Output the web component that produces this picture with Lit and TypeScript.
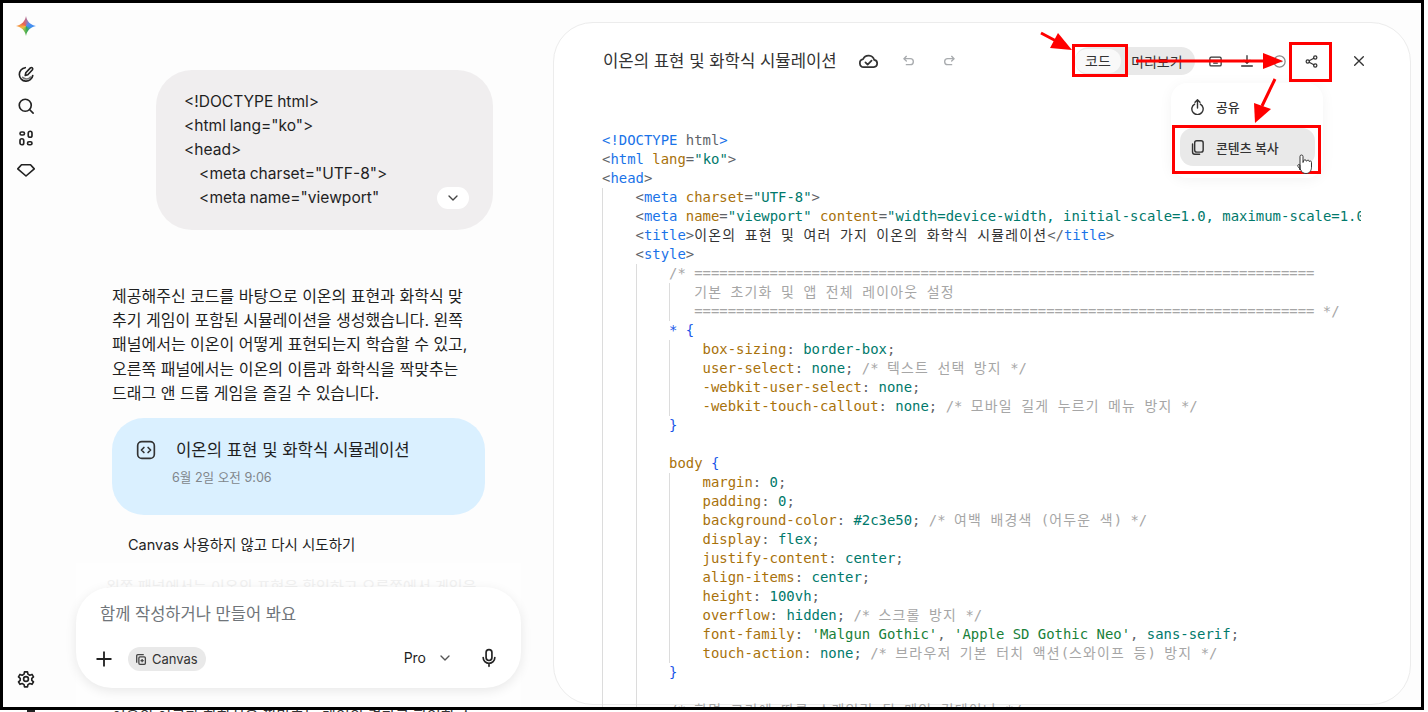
import { LitElement, html, svg, css, nothing, type TemplateResult, type SVGTemplateResult } from 'lit';
import { customElement } from 'lit/decorators.js';

const RULE = '='.repeat(74);

// hangul takes two cells in the code font, so each run gets extra tracking
const cells = (text: string) => text.split(/([가-힣]+)/).map((part, i) => i % 2 ? html`<span class="wide">${part}</span>` : part);

// one css declaration row of the code viewer
const decl = (prop: string, val: string | TemplateResult, note?: string) => html`<div class="ln"><span class="prop">${prop}</span><span class="pun">: </span><span class="val">${val}</span><span class="pun">;</span>${note ? html`<span class="cm"> /* ${cells(note)} */</span>` : nothing}</div>`;

const tag = (name: string) => html`<span class="pun">&lt;</span><span class="tag">${name}</span>`;
const close = html`<span class="pun">&gt;</span>`;
const attr = (name: string, val: string) => html` <span class="prop">${name}</span><span class="pun">=</span><span class="val">"${val}"</span>`;

@customElement('app-root')
export class AppRoot extends LitElement {
  static styles = css`
    :host {
      display: block;
      position: relative;
      width: 1428px;
      height: 712px;
      overflow: hidden;
      background: #fff;
      font-family: 'Inter', 'Noto Sans CJK KR', sans-serif;
      color: #1f1f1f;
    }
    svg { display: block; }
    .frame {
      box-sizing: border-box;
      width: 1424px;
      height: 710px;
      border: 3px solid #000;
      background: #fdfdfd;
      display: flex;
      overflow: hidden;
    }
    .strip {
      display: flex;
      height: 2px;
      overflow: hidden;
      font-size: 15px;
      line-height: 16px;
      white-space: nowrap;
      color: #333;
    }
    .strip i { width: 8px; height: 2px; margin: 0 77px 0 27px; background: #222; }
    .strip span { display: block; margin-top: -1px; }

    /* rail */
    .rail {
      width: 45px;
      flex: none;
      display: flex;
      flex-direction: column;
      align-items: center;
      padding: 13px 0 19px;
      box-sizing: border-box;
    }
    .rail svg { width: 18px; height: 18px; margin-left: 1px; }
    .star {
      width: 20px;
      height: 20px;
      margin: 0 0 29px 1px;
      background: conic-gradient(from -20deg, #d9656f 0deg, #5b8def 70deg, #3f8ff0 120deg, #34a853 185deg, #8cc152 225deg, #f4b942 270deg, #ef6a4c 320deg, #d9656f 360deg);
      clip-path: path('M10 0C11 5.500 14.500 9 20 10C14.500 11 11 14.500 10 20C9 14.500 5.500 11 0 10C5.500 9 9 5.500 10 0Z');
    }
    .rail .ri { margin-bottom: 14px; }
    .rail .gear { margin-top: auto; }

    /* chat column */
    .chat {
      width: 505px;
      flex: none;
      position: relative;
      padding-top: 67px;
      box-sizing: border-box;
    }
    .bubble {
      position: relative;
      box-sizing: border-box;
      width: 337px;
      height: 160px;
      margin-left: 108px;
      padding: 20px 28px;
      background: #f0eeef;
      border-radius: 36px;
      font-size: 15.55px;
      line-height: 24px;
      word-spacing: -0.6px;
      white-space: pre;
    }
    .chev {
      position: absolute;
      right: 24px;
      bottom: 21px;
      width: 32px;
      height: 22px;
      border-radius: 11px;
      background: #fff;
      display: flex;
      align-items: center;
      justify-content: center;
    }
    .answer {
      margin: 54px 0 0 64px;
      font-size: 16px;
      line-height: 24.2px;
      white-space: pre;
    }
    .doc {
      box-sizing: border-box;
      width: 373px;
      height: 97px;
      margin: 13px 0 0 64px;
      padding: 21px 0 0 24px;
      border-radius: 32px;
      background: #daf0ff;
      display: grid;
      grid-template-columns: 40px auto;
      justify-content: start;
      align-content: start;
      row-gap: 8px;
    }
    .doc svg { width: 20px; height: 20px; margin-top: 1px; }
    .doc-title { font-size: 16.7px; line-height: 22px; }
    .doc-date { grid-column: 2; margin-left: -4px; font-size: 12.6px; line-height: 18px; color: #80868b; }
    .retry { margin: 20px 0 0 80px; font-size: 14.5px; line-height: 20px; }
    .fade {
      position: absolute;
      left: 28px;
      right: 32px;
      top: 560px;
      height: 150px;
      background: #fefefe;
      overflow: hidden;
      padding-left: 30px;
    }
    .fade span {
      display: block;
      margin-top: 14px;
      font-size: 15px;
      line-height: 20px;
      white-space: nowrap;
      color: #f1f1f1;
    }
    .input {
      position: absolute;
      left: 28px;
      top: 584px;
      width: 445px;
      height: 101px;
      box-sizing: border-box;
      padding: 15px 24px 0 24px;
      background: #fff;
      border-radius: 36px;
      box-shadow: 0 3px 12px rgba(0, 0, 0, 0.09);
    }
    .hint { font-size: 16.5px; line-height: 24px; color: #70757a; }
    .tools { display: flex; align-items: center; margin-top: 21px; }
    .tools .plus { width: 20px; height: 20px; margin-left: -6px; }
    .chip {
      display: flex;
      align-items: center;
      gap: 5px;
      height: 24px;
      margin-left: 14px;
      padding: 0 8px 0 6px;
      border-radius: 12px;
      background: #e9e9e9;
      font-size: 13px;
      color: #333;
    }
    .pro { margin-left: auto; font-size: 14px; display: flex; align-items: center; gap: 11px; margin-top: -3px; }
    .mic { margin-left: 26px; margin-right: -2px; margin-top: -2px; }

    /* canvas card */
    .card {
      position: relative;
      box-sizing: border-box;
      flex: none;
      width: 858px;
      height: 683px;
      margin-top: 19px;
      background: #fff;
      border: 1px solid #ececec;
      border-radius: 40px;
    }
    .head {
      display: flex;
      align-items: center;
      height: 76px;
      padding: 0 35px 0 49px;
    }
    .title { font-size: 16.7px; color: #333; white-space: nowrap; margin-top: -2px; }
    .btn { flex: none; width: 40px; height: 32px; display: flex; align-items: center; justify-content: center; }
    .btn.s { width: 32px; }
    .cloud { margin-left: 12px; }
    .tabs {
      margin-left: auto;
      margin-right: 4px;
      display: flex;
      align-items: center;
      width: 120px;
      height: 28px;
      border-radius: 14px;
      background: #e9e9e9;
      font-size: 14px;
      color: #333;
    }
    .tabs .on {
      width: 46px;
      height: 24px;
      line-height: 24px;
      text-align: center;
      border-radius: 12px;
      background: #f9f9f9;
    }
    .tabs .off { margin-left: 10px; white-space: nowrap; }
    .x { margin-left: 16px; }
    .code {
      box-sizing: border-box;
      width: 759px;
      margin: 32px 0 0 48px;
      overflow: hidden;
      font-family: 'DejaVu Sans Mono', 'Noto Sans CJK KR', monospace;
      font-size: 13.93px;
      line-height: 19px;
      color: #333;
    }
    .ln { height: 19px; white-space: pre; }
    .block { border-left: 1px solid #dcdcdc; padding-left: calc(4ch - 1px); }
    .block.c3 { padding-left: calc(3ch - 1px); }
    .tag { color: #1a73e8; }
    .pun { color: #5f6368; }
    .prop { color: #a8710a; }
    .val { color: #00796b; }
    .str { color: #188038; }
    .cm { color: #a6a6a6; }
    .sel { color: #1a56e8; }
    .ko { color: #333; }
    .wide { letter-spacing: 1.2px; }

    /* share menu */
    .menu {
      position: absolute;
      left: 617px;
      top: 60px;
      width: 152px;
      height: 95px;
      border-radius: 16px;
      background: #fff;
      box-shadow: 0 2px 14px rgba(0, 0, 0, 0.05);
    }
    .item {
      position: absolute;
      left: 9px;
      width: 135px;
      height: 38px;
      box-sizing: border-box;
      padding-left: 9px;
      display: flex;
      align-items: center;
      gap: 10px;
      font-size: 12.9px;
      font-weight: 500;
      color: #333;
      border-radius: 13px;
    }
    .item.a { top: 4px; }
    .item.b { top: 45px; background: #e9e9e9; }

    /* red marks drawn on top of the capture */
    .marks { position: absolute; left: 0; top: 0; pointer-events: none; }
  `;

  private ico(body: SVGTemplateResult, size = 18, color = '#333') {
    return html`<svg width=${size} height=${size} viewBox="0 0 24 24" fill="none" stroke=${color} stroke-width="2" stroke-linecap="round" stroke-linejoin="round">${body}</svg>`;
  }

  private renderRail() {
    return html`<nav class="rail">
      <div class="star"></div>
      <svg class="ri" viewBox="0 0 24 24" fill="none" stroke="#222" stroke-width="2.2" stroke-linecap="round" stroke-linejoin="round">
        <path d="M11 3.600A9 9 0 1 0 21 14" /><path d="M7.5 16.500c3.500 3 8 3 10.500-.5" stroke="#777" /><path d="M11 14l.7-3.600 6.200-6.600a1.900 1.900 0 0 1 2.700 2.600L14.400 13z" />
      </svg>
      <svg class="ri" viewBox="0 0 24 24" fill="none" stroke="#222" stroke-width="2.2" stroke-linecap="round"><circle cx="11" cy="11" r="8" /><path d="M17 17L21.500 21.500" /></svg>
      <svg class="ri" viewBox="0 0 24 24" fill="none" stroke="#222" stroke-width="2.2"><rect x="4" y="4" width="6" height="4" rx="2" /><rect x="15" y="3" width="5" height="8" rx="2.500" /><rect x="4" y="13" width="5" height="8" rx="2.500" /><rect x="14" y="17" width="6" height="4" rx="2" /></svg>
      <svg class="ri" viewBox="0 0 24 24" fill="none" stroke="#222" stroke-width="2.2" stroke-linejoin="round"><path d="M6 5h12l5 5.500L12 20 1 10.500z" /></svg>
      <svg class="gear" viewBox="0 0 24 24" fill="none" stroke="#222" stroke-width="2.2" stroke-linejoin="round"><circle cx="12" cy="12" r="3.200" /><path d="M10 2.500h4l.6 3 2.500 1.400 2.900-1 2 3.400-2.300 2v2.400l2.300 2-2 3.400-2.900-1-2.500 1.400-.6 3h-4l-.6-3-2.500-1.400-2.900 1-2-3.400 2.300-2v-2.400l-2.300-2 2-3.400 2.900 1 2.500-1.400z" /></svg>
    </nav>`;
  }

  private renderChat() {
    return html`<section class="chat">
      <div class="bubble">&lt;!DOCTYPE html&gt;
&lt;html lang="ko"&gt;
&lt;head&gt;
    &lt;meta charset="UTF-8"&gt;
    &lt;meta name="viewport"<div class="chev">${this.ico(svg`<path d="M6 9l6 6 6-6" />`, 16, '#444')}</div></div>
      <div class="answer">제공해주신 코드를 바탕으로 이온의 표현과 화학식 맞
추기 게임이 포함된 시뮬레이션을 생성했습니다. 왼쪽
패널에서는 이온이 어떻게 표현되는지 학습할 수 있고,
오른쪽 패널에서는 이온의 이름과 화학식을 짝맞추는
드래그 앤 드롭 게임을 즐길 수 있습니다.</div>
      <div class="doc">
        <svg viewBox="0 0 24 24" fill="none" stroke="#333" stroke-width="2" stroke-linecap="round" stroke-linejoin="round"><rect x="2" y="2" width="20" height="20" rx="5" /><path d="M9.500 9l-3 3 3 3M14.500 9l3 3-3 3" /></svg>
        <div class="doc-title">이온의 표현 및 화학식 시뮬레이션</div>
        <div class="doc-date">6월 2일 오전 9:06</div>
      </div>
      <div class="retry">Canvas 사용하지 않고 다시 시도하기</div>
      <div class="fade"><span>왼쪽 패널에서는 이온의 표현을 확인하고 오른쪽에서 게임을</span></div>
      <div class="input">
        <div class="hint">함께 작성하거나 만들어 봐요</div>
        <div class="tools">
          <svg class="plus" viewBox="0 0 24 24" fill="none" stroke="#222" stroke-width="2.200"><path d="M12 3v18M3 12h18" /></svg>
          <div class="chip">
            <svg width="13" height="13" viewBox="0 0 24 24" fill="none" stroke="#444" stroke-width="2.400" stroke-linejoin="round"><path d="M5 18V5a2 2 0 0 1 2-2h11" /><rect x="9" y="7" width="12" height="14" rx="2" /><path d="M15 11v6M12 14h6" /></svg>
            Canvas
          </div>
          <div class="pro">Pro ${this.ico(svg`<path d="M6 9l6 6 6-6" />`, 16, '#555')}</div>
          <svg class="mic" width="20" height="20" viewBox="0 0 24 24" fill="none" stroke="#222" stroke-width="2" stroke-linecap="round"><rect x="8.500" y="2" width="7" height="13" rx="3.500" /><path d="M5 11.500a7 7 0 0 0 14 0M12 18.500V22" /></svg>
        </div>
      </div>
    </section>`;
  }

  private renderHead() {
    return html`<header class="head">
      <div class="title">이온의 표현 및 화학식 시뮬레이션</div>
      <div class="btn cloud">${this.ico(svg`<path d="M6.500 18.500h11.500a4.200 4.200 0 0 0 .6-8.300A6.800 6.800 0 0 0 5.800 9.400 4.600 4.600 0 0 0 6.500 18.500z" /><path d="M8.500 13l2.500 2.500 4.500-4.500" />`, 21)}</div>
      <div class="btn">${this.ico(svg`<path d="M8 5L4.500 8.500 8 12" /><path d="M5 8.500h9a4.500 4.500 0 0 1 0 9H8" />`, 16, '#a8abae')}</div>
      <div class="btn">${this.ico(svg`<path d="M16 5l3.500 3.500L16 12" /><path d="M19 8.500h-9a4.500 4.500 0 0 0 0 9h6" />`, 16, '#a8abae')}</div>
      <div class="tabs"><div class="on">코드</div><div class="off">미리보기</div></div>
      <div class="btn s">${this.ico(svg`<rect x="3" y="5" width="18" height="14" rx="2" /><path d="M3 10h18M9 14.500h6" />`, 15)}</div>
      <div class="btn s">${this.ico(svg`<path d="M12 4v11M7.500 11l4.500 4.500 4.500-4.500M4 19.500h16" />`, 16)}</div>
      <div class="btn s">${this.ico(svg`<circle cx="12" cy="12" r="9" /><path d="M8 12h8" />`, 15, '#888')}</div>
      <div class="btn s">${this.ico(svg`<circle cx="18" cy="5.500" r="2.600" /><circle cx="6" cy="12" r="2.600" /><circle cx="18" cy="18.500" r="2.600" /><path d="M8.300 10.700l7.400-4M8.300 13.300l7.400 4" />`, 15)}</div>
      <div class="btn s x">${this.ico(svg`<path d="M5.500 5.500l13 13M18.500 5.500l-13 13" />`, 16)}</div>
    </header>`;
  }

  private renderCode() {
    const comment = (t: string) => html`<div class="ln cm">${cells(t)}</div>`;
    return html`<div class="code">
      <div class="ln"><span class="tag">&lt;!DOCTYPE</span> <span class="pun">html</span><span class="tag">&gt;</span></div>
      <div class="ln">${tag('html')}${attr('lang', 'ko')}${close}</div>
      <div class="ln">${tag('head')}${close}</div>
      <div class="block">
        <div class="ln">${tag('meta')}${attr('charset', 'UTF-8')}${close}</div>
        <div class="ln">${tag('meta')}${attr('name', 'viewport')}${attr('content', 'width=device-width, initial-scale=1.0, maximum-scale=1.0, user-scalable=no')}${close}</div>
        <div class="ln">${tag('title')}${close}<span class="ko">${cells('이온의 표현 및 여러 가지 이온의 화학식 시뮬레이션')}</span><span class="pun">&lt;/</span><span class="tag">title</span>${close}</div>
        <div class="ln">${tag('style')}${close}</div>
        <div class="block">
          <div class="ln cm">/* ${RULE}</div>
          <div class="block c3">
            ${comment('기본 초기화 및 앱 전체 레이아웃 설정')}
            ${comment(RULE + ' */')}
          </div>
          <div class="ln sel">* {</div>
          <div class="block">
            ${decl('box-sizing', 'border-box')}
            ${decl('user-select', 'none', '텍스트 선택 방지')}
            ${decl('-webkit-user-select', 'none')}
            ${decl('-webkit-touch-callout', 'none', '모바일 길게 누르기 메뉴 방지')}
          </div>
          <div class="ln sel">}</div>
          <div class="ln"></div>
          <div class="ln"><span class="prop">body</span> <span class="sel">{</span></div>
          <div class="block">
            ${decl('margin', '0')}
            ${decl('padding', '0')}
            ${decl('background-color', '#2c3e50', '여백 배경색 (어두운 색)')}
            ${decl('display', 'flex')}
            ${decl('justify-content', 'center')}
            ${decl('align-items', 'center')}
            ${decl('height', '100vh')}
            ${decl('overflow', 'hidden', '스크롤 방지')}
            ${decl('font-family', html`<span class="str">'Malgun Gothic'</span><span class="pun">, </span><span class="str">'Apple SD Gothic Neo'</span><span class="pun">, </span>sans-serif`)}
            ${decl('touch-action', 'none', '브라우저 기본 터치 액션(스와이프 등) 방지')}
          </div>
          <div class="ln sel">}</div>
          <div class="ln"></div>
          ${comment('/* 화면 크기에 따른 스케일링 될 메인 컨테이너 */')}
        </div>
      </div>
    </div>`;
  }

  private renderMenu() {
    return html`<div class="menu">
      <div class="item a">${this.ico(svg`<path d="M8 8.500a8 8 0 1 0 8 0" /><path d="M12 14V2.500M8.500 6L12 2.500 15.500 6" />`, 17)}공유</div>
      <div class="item b">${this.ico(svg`<rect x="8" y="2.500" width="12" height="16" rx="3" /><path d="M5 7v11.500a3 3 0 0 0 3 3h7" />`, 17)}콘텐츠 복사</div>
    </div>`;
  }

  private renderMarks() {
    return html`<svg class="marks" width="1428" height="712" viewBox="0 0 1428 712">
      <g fill="none" stroke="#f00" stroke-width="3">
        <rect x="1073.500" y="45.500" width="53" height="30" />
        <rect x="1290.500" y="43.500" width="40" height="37" />
        <rect x="1173.500" y="126.500" width="146" height="46" />
        <path d="M1041 33L1058 42M1136 61H1264M1275 79L1262 106" />
      </g>
      <g fill="#f00">
        <path d="M1072 50L1050 48L1058 33z" />
        <path d="M1283 61L1263 53V69z" />
        <path d="M1255 123L1254 103L1271 109z" />
      </g>
      <path transform="translate(-3 0)" d="M1303 170v-13.500a1.500 1.500 0 0 1 3 0v6l.6-1.800a1.400 1.400 0 0 1 2.700.5l.5-.2a1.300 1.300 0 0 1 2.500.6a1.200 1.200 0 0 1 2.200.7v5c0 3-1.800 6.200-5.500 6.200c-3 0-4.200-1.500-5-3.200l-3-3.800a1.200 1.200 0 0 1 1.900-1.500z" fill="#fff" stroke="#333" stroke-width="1" stroke-linejoin="round" />
    </svg>`;
  }

  render() {
    return html`
      <div class="frame">
        ${this.renderRail()}
        ${this.renderChat()}
        <main class="card">
          ${this.renderHead()}
          ${this.renderCode()}
          ${this.renderMenu()}
        </main>
      </div>
      <div class="strip"><i></i><span>이온의 이름과 화학식을 짝맞추는 게임의 결과를 확인할 수</span></div>
      ${this.renderMarks()}
    `;
  }
}
